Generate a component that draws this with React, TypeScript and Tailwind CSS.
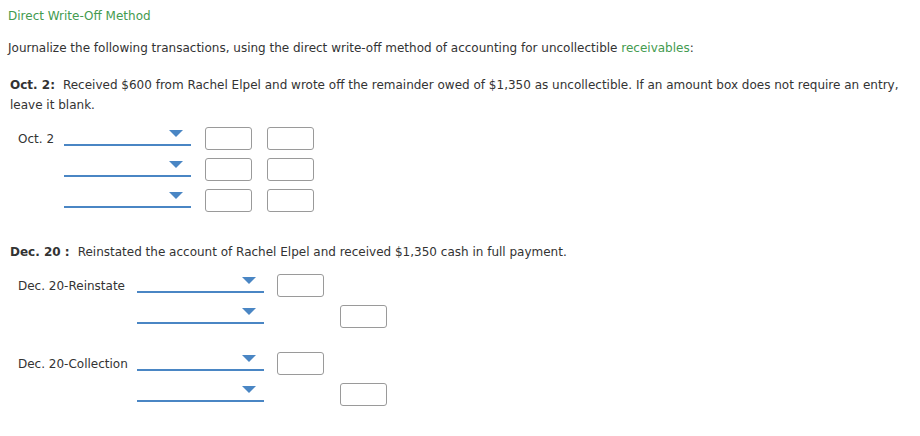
import React from "react";

const Dropdown: React.FC<{ width?: string }> = ({ width = "w-[127px]" }) => (
    <div className={`relative ${width} h-[19px] border-b-2 border-[#4a86c4]`}>
        <svg
            className="absolute right-[8px] top-[3px]"
            width="14"
            height="7"
            viewBox="0 0 14 7"
        >
            <polygon points="0,0 14,0 7,7" fill="#4a86c4" />
        </svg>
    </div>
);

const Box: React.FC = () => (
    <div className="w-[47px] h-[23px] rounded-[3px] border border-[#9a9a9a] bg-white" />
);

const App: React.FC = () => {
    return (
        <div className="w-[920px] h-[436px] bg-white text-[#333] text-[12px] leading-[20px] font-['DejaVu_Sans',Verdana,sans-serif] pl-[8px] pt-[6px]">
            <div className="text-[#449b4f]">Direct Write-Off Method</div>

            <p className="mt-[12px]">
                Journalize the following transactions, using the direct write-off method of accounting for
                uncollectible <span className="text-[#449b4f]">receivables</span>:
            </p>

            <p className="mt-[17px] pl-[2px] pr-[10px]">
                <b className="mr-[8px]">Oct. 2:</b>Received $600 from Rachel Elpel and wrote off the remainder
                owed of $1,350 as uncollectible. If an amount box does not require an entry, leave it blank.
            </p>

            <div className="mt-[12px] pl-[10px] flex flex-col gap-[8px]">
                {[0, 1, 2].map((i) => (
                    <div key={`oct-${i}`} className="flex items-start h-[23px]">
                        <div className="w-[46px] self-center">{i === 0 ? "Oct. 2" : ""}</div>
                        <Dropdown />
                        <div className="ml-[14px] flex gap-[15px]">
                            <Box />
                            <Box />
                        </div>
                    </div>
                ))}
            </div>

            <p className="mt-[30px] pl-[2px]">
                <b className="mr-[8px]">Dec. 20 :</b>Reinstated the account of Rachel Elpel and received
                $1,350 cash in full payment.
            </p>

            <div className="mt-[12px] pl-[10px] flex flex-col">
                {["Reinstate", "Collection"].map((label, k) => (
                    <div key={label} className={`flex flex-col gap-[8px] ${k > 0 ? "mt-[24px]" : ""}`}>
                        <div className="flex items-start h-[23px]">
                            <div className="w-[119px] self-center">Dec. 20-{label}</div>
                            <Dropdown />
                            <div className="ml-[13px]">
                                <Box />
                            </div>
                        </div>
                        <div className="flex items-start h-[23px]">
                            <div className="w-[119px]" />
                            <Dropdown />
                            <div className="ml-[76px]">
                                <Box />
                            </div>
                        </div>
                    </div>
                ))}
            </div>
        </div>
    );
};

export default App;
